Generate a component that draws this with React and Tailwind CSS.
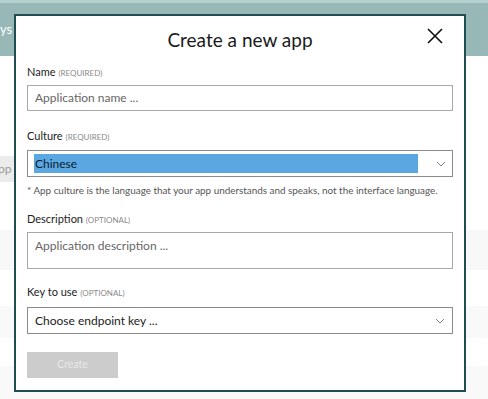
import React from 'react';

const font = { fontFamily: 'Lato, "Open Sans", sans-serif' };

const Label = ({ name, note, className = '' }) => (
    <div className={`text-[11px] leading-[14px] text-[#222] ${className}`}>
        {name} <span className="text-[8px] uppercase text-[#8a8a8a]">({note})</span>
    </div>
);

const Chevron = () => (
    <svg width="10" height="6" viewBox="0 0 10 6" className="shrink-0">
        <path d="M1 1l4 4 4-4" fill="none" stroke="#888" strokeWidth="1" />
    </svg>
);

const App = () => {
    return (
        <div className="relative w-[488px] h-[399px] overflow-hidden bg-white" style={font}>
            {/* page behind the dialog */}
            <div className="h-[56px] bg-[#98b7b7] border-t-[3px] border-[#b4cfcf] flex items-center">
                <span className="-ml-[13px] text-[13px] text-white">keys</span>
            </div>
            <div className="flex flex-col">
                <div className="h-[100px] bg-white" />
                <div className="h-[26px] w-[14px] bg-[#ececec] flex items-center text-[12px] text-[#999]">
                    <span className="-ml-[10px]">App</span>
                </div>
                <div className="h-[48px] bg-white" />
                <div className="h-[40px] bg-[#f8f8f8]" />
                <div className="h-[36px] bg-white" />
                <div className="h-[32px] bg-[#f9f9f9]" />
                <div className="h-[28px] bg-white" />
                <div className="h-[34px] bg-[#f9f9f9]" />
            </div>

            {/* dialog */}
            <div className="absolute left-[14px] top-[14px] w-[452px] h-[378px] bg-white border-2 border-[#1f4d52] px-[11px]">
                <div className="relative h-[44px] flex items-center justify-center pt-[4px]">
                    <h2 className="text-[19px] text-[#1a1a1a] font-normal">Create a new app</h2>
                    <svg width="16" height="16" viewBox="0 0 16 16" className="absolute right-[10px] top-[12px]">
                        <path d="M1 1l14 14M15 1L1 15" stroke="#111" strokeWidth="1.6" />
                    </svg>
                </div>

                <Label name="Name" note="required" className="mt-[5px]" />
                <div className="mt-[5px] h-[26px] border border-[#a8a8a8] flex items-center px-[7px] text-[12px] text-[#666]">
                    Application name ...
                </div>

                <Label name="Culture" note="required" className="mt-[18px]" />
                <div className="mt-[6px] h-[27px] border border-[#8a8a8a] flex items-center px-[6px] gap-[18px]">
                    <div className="flex-1 h-[19px] bg-[#5ba7e2] flex items-center px-[1px] text-[12px] text-[#0a1d33]">
                        Chinese
                    </div>
                    <Chevron />
                </div>
                <div className="mt-[7px] text-[9.9px] leading-[12px] text-[#555] whitespace-nowrap">
                    * App culture is the language that your app understands and speaks, not the interface language.
                </div>

                <Label name="Description" note="optional" className="mt-[16px]" />
                <div className="mt-[5px] h-[37px] border border-[#a8a8a8] px-[7px] pt-[4px] text-[12px] text-[#666]">
                    Application description ...
                </div>

                <Label name="Key to use" note="optional" className="mt-[16px]" />
                <div className="mt-[7px] h-[27px] border border-[#8a8a8a] flex items-center px-[7px] text-[12px] text-[#222]">
                    <span className="flex-1">Choose endpoint key ...</span>
                    <Chevron />
                </div>

                <button className="mt-[18px] w-[91px] h-[26px] bg-[#cccccc] text-[10.5px] text-[#e8e8e8] flex items-center justify-center">
                    Create
                </button>
            </div>
        </div>
    );
};

export default App;
